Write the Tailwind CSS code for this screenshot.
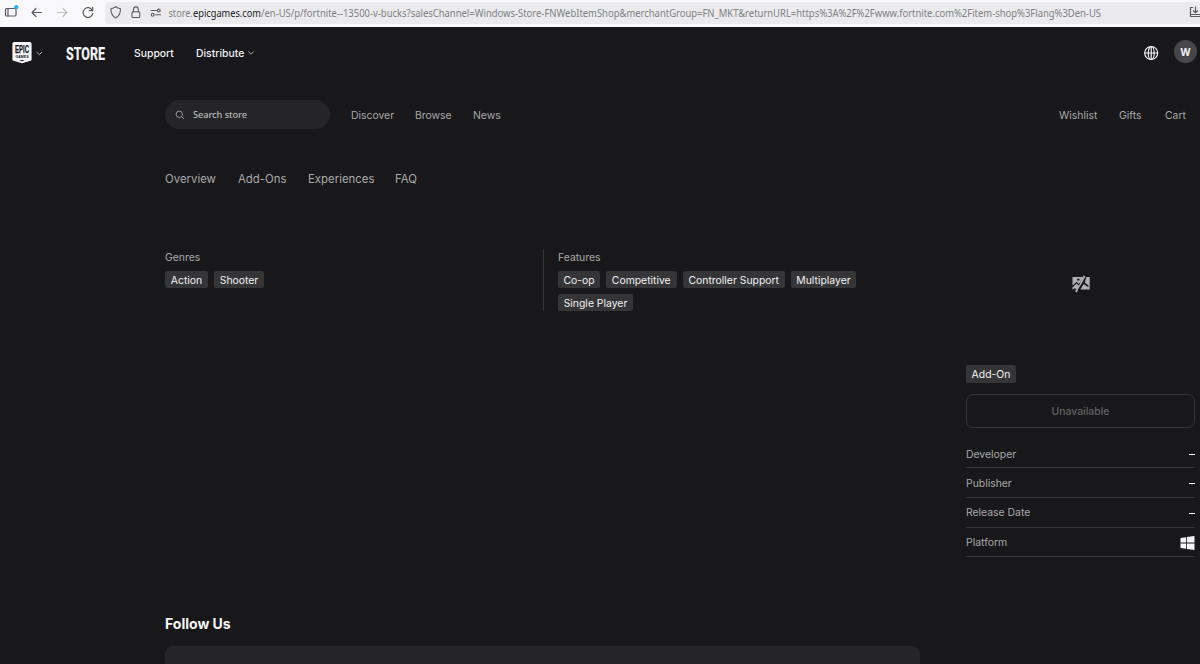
<!DOCTYPE html>
<html lang="en">
<head>
<meta charset="utf-8">
<title>Epic Games Store</title>
<script src="https://cdn.jsdelivr.net/npm/@tailwindcss/browser@4"></script>
</head>
<body class="w-[1200px] h-[664px] overflow-hidden bg-[#18181a] font-['Inter',sans-serif] text-[10.4px] text-[#a8a8aa]">
<div class="h-[27px] bg-[#f9f9fb] flex items-center overflow-hidden">
  <svg class="w-[104px] h-[27px] shrink-0" viewBox="0 0 104 27" fill="none" stroke="#5b5b66" stroke-width="1.2" stroke-linecap="round" stroke-linejoin="round">
    <rect x="5.500" y="8.500" width="10.500" height="7.500" rx="1"/><path d="M8 8.500v7.500"/>
    <circle cx="16.300" cy="7.200" r="2.100" fill="#25b5e4" stroke="none"/>
    <path d="M41.500 12.500H32M36 8.500l-4 4 4 4"/>
    <path stroke="#bdbdc3" d="M57.500 12.500H67M63 8.500l4 4-4 4"/>
    <path d="M92.300 10.200a4.900 4.900 0 1 0 .5 3.200M92.700 7.300v3.400h-3.400"/>
  </svg>
  <div class="ml-px mt-[-1px] h-[22px] w-[1095px] shrink-0 rounded-l-[4px] bg-[#ebebed] flex items-center">
    <svg class="w-[62px] h-[22px] shrink-0" viewBox="105 2 62 22" fill="none" stroke="#5b5b66" stroke-width="1.1" stroke-linejoin="round" stroke-linecap="round">
      <path d="M115.700 6.800c1.500 1.200 3 1.700 4.800 1.900 0 4.500-1.200 7.400-4.800 9.200-3.600-1.800-4.800-4.700-4.800-9.200 1.800-.2 3.300-.7 4.800-1.900z"/>
      <rect x="132" y="11.800" width="7.800" height="5.700" rx="1"/><path d="M133.500 11.800V9.300a2.400 2.400 0 0 1 4.800 0v2.500"/>
      <path d="M151 10.500h5.500M155 14.700h5.500"/><circle cx="158.800" cy="10.500" r="1.400"/><circle cx="152.700" cy="14.700" r="1.400"/>
    </svg>
    <svg class="w-[940px] h-[22px] shrink-0" viewBox="167 2 940 22" font-family="Noto Sans, sans-serif" font-size="10.500" fill="#808086">
      <text x="168.500" y="16.800" textLength="24.300" lengthAdjust="spacingAndGlyphs">store.</text>
      <text x="193" y="16.800" textLength="68" lengthAdjust="spacingAndGlyphs" fill="#222228">epicgames.com</text>
      <text x="261" y="16.800" textLength="840" lengthAdjust="spacingAndGlyphs">/en-US/p/fortnite--13500-v-bucks?salesChannel=Windows-Store-FNWebItemShop&amp;merchantGroup=FN_MKT&amp;returnURL=https%3A%2F%2Fwww.fortnite.com%2Fitem-shop%3Flang%3Den-US</text>
    </svg>
    <svg class="ml-auto w-[12px] h-[22px]" viewBox="1188 1 12 22" fill="none" stroke="#5b5b66" stroke-width="1.200"><path d="M1193 6.500h-2.500v9h11M1195.500 5.500v6M1193 9.500l2.500 2.300 2.500-2.300M1190.500 13.500h10"/></svg>
  </div>
</div>

<header class="h-[52px] bg-[#18181c] flex items-center text-[#f2f2f4] font-medium">
  <svg class="w-[118px] h-[52px]" viewBox="0 27 118 52">
    <path d="M14.200 42h15.600q1.800 0 1.800 1.800v15.400q0 1.200-1 1.600l-8.600 2.500-8.600-2.500q-1-.4-1-1.600V43.800q0-1.800 1.800-1.800z" fill="#f5f5f7"/>
    <text x="15" y="53" font-family="Liberation Sans, sans-serif" font-weight="700" font-size="11" textLength="14" lengthAdjust="spacingAndGlyphs" fill="#18181c" stroke="#18181c" stroke-width=".25">EPIC</text>
    <text x="15.500" y="58" font-family="Liberation Sans, sans-serif" font-weight="700" font-size="4" textLength="13" lengthAdjust="spacingAndGlyphs" fill="#18181c">GAMES</text>
    <path d="M19.200 60h5.600l-2.800 1.300z" fill="#18181c"/>
    <path d="M36.600 52l2.700 2.700L42 52" fill="none" stroke="#a5a5a9" stroke-width="1"/>
    <text x="66" y="59.500" font-family="Roboto, sans-serif" font-weight="800" font-size="17.800" textLength="39" lengthAdjust="spacingAndGlyphs" fill="#f5f5f7" stroke="#f5f5f7" stroke-width=".1">STORE</text>
  </svg>
  <span class="ml-[16px] w-[62px] pt-[2px]">Support</span>
  <span class="pt-[2px]">Distribute</span>
  <svg class="ml-[3px] w-[8px] h-[8px]" viewBox="0 0 8 8" fill="none" stroke="#a5a5a9"><path d="M1.300 2.500L4 5.200l2.700-2.700"/></svg>
  <svg class="ml-auto mr-[15px] w-[16px] h-[16px]" viewBox="0 0 16 16" fill="none" stroke="#f5f5f7" stroke-width="1.200"><circle cx="8.200" cy="8" r="6.500"/><ellipse cx="8.200" cy="8" rx="3" ry="6.500"/><path d="M1.700 8h13M8.200 1.500v13"/></svg>
  <div class="mt-[-3px] mr-[3px] size-[23px] rounded-full bg-[#47474a] flex items-center justify-center pt-px text-[10px] font-bold">W</div>
</header>

<nav class="mt-[21px] ml-[165px] mr-[13px] h-[29px] flex items-center">
  <div class="w-[165px] h-[29px] rounded-full bg-[#252528] flex items-center text-[#b8b8ba] font-['Noto_Sans',sans-serif] text-[9.3px] font-medium tracking-[-0.100px]">
    <svg class="ml-[10px] mr-[8px] w-[10px] h-[10px]" viewBox="0 0 10 10" fill="none" stroke="#a0a0a3" stroke-width=".9"><circle cx="4.300" cy="4.300" r="3.200"/><path d="M6.700 6.700L9 9"/></svg>Search store
  </div>
  <span class="ml-[21px] w-[64px] pt-[2px]">Discover</span><span class="w-[58px] pt-[2px]">Browse</span><span class="pt-[2px]">News</span>
  <span class="ml-auto w-[60px] pt-[2px]">Wishlist</span><span class="w-[46px] pt-[2px]">Gifts</span><span class="w-[22px] pt-[2px]">Cart</span>
</nav>

<nav class="mt-[41px] ml-[165px] h-[18px] pt-[2px] flex items-center text-[11.4px]">
  <span class="w-[73px]">Overview</span><span class="w-[70px]">Add-Ons</span><span class="w-[87px]">Experiences</span><span>FAQ</span>
</nav>

<div class="flex ml-[165px]">
  <main class="w-[755px] pt-[61px]">
    <div class="flex h-[62px]">
      <section class="w-[378px] pt-px">
        <h2 class="h-[16px] leading-[16px]">Genres</h2>
        <div class="mt-[5px] flex gap-[6px] text-[#f2f2f4]">
          <span class="w-[43px] h-[17px] pt-[2px] rounded-[2px] bg-[#353537] flex items-center justify-center">Action</span>
          <span class="w-[50px] h-[17px] pt-[2px] rounded-[2px] bg-[#353537] flex items-center justify-center">Shooter</span>
        </div>
      </section>
      <section class="w-[377px] pt-px pl-[14px] border-l border-[#353537]">
        <h2 class="h-[16px] leading-[16px]">Features</h2>
        <div class="mt-[5px] flex flex-wrap gap-[6px] text-[#f2f2f4]">
          <span class="w-[42px] h-[17px] pt-[2px] rounded-[2px] bg-[#353537] flex items-center justify-center">Co-op</span>
          <span class="w-[70.5px] h-[17px] pt-[2px] rounded-[2px] bg-[#353537] flex items-center justify-center">Competitive</span>
          <span class="w-[102.5px] h-[17px] pt-[2px] rounded-[2px] bg-[#353537] flex items-center justify-center">Controller Support</span>
          <span class="w-[65px] h-[17px] pt-[2px] rounded-[2px] bg-[#353537] flex items-center justify-center">Multiplayer</span>
          <span class="w-[75px] h-[17px] pt-[2px] rounded-[2px] bg-[#353537] flex items-center justify-center">Single Player</span>
        </div>
      </section>
    </div>
    <h2 class="mt-[303px] h-[20px] leading-[20px] text-[14px] font-bold text-[#f5f5f7]">Follow Us</h2>
    <div class="mt-[12px] h-[18px] rounded-t-[8px] bg-[#252527]"></div>
  </main>
  <aside class="ml-[46px] w-[229px] pt-[86px]">
    <svg class="mx-auto w-[20px] h-[20px]" viewBox="0 0 20 20" fill="#b0b0b2"><path d="M1.500 3h10.600L9.300 8 7.700 9.900 5.600 7.700 1.500 11.800z"/><circle cx="7.300" cy="5.600" r="1.200" fill="#18181a"/><path d="M12.600 1.500l1.900 1-3.900 7-3.700 6-.8 3-2.100-1.200 1.300-2.300-1.600-.8-2.200 1.500v-2.300l4.100-3.900 2.200 2.200z"/><path d="M15.400 3h3.300v12.500H9.300l3.400-5.600 4.300 3 .9-1.200-4.100-3.300z"/></svg>
    <div class="mt-[71px] w-[50px] h-[18px] rounded-[2px] bg-[#353537] text-[#f2f2f4] flex items-center justify-center pt-[2px]">Add-On</div>
    <div class="mt-[11px] h-[34px] rounded-[7px] border border-[#353537] text-[#626265] font-medium flex items-center justify-center pt-[2px]">Unavailable</div>
    <div class="mt-[11px] h-[29px] pt-[3px] border-b border-[#353537] flex items-center justify-between">Developer<i class="h-px w-[6px] bg-[#f2f2f4]"></i></div>
    <div class="h-[30px] pt-[2px] border-b border-[#353537] flex items-center justify-between">Publisher<i class="h-px w-[6px] bg-[#f2f2f4]"></i></div>
    <div class="h-[30px] pt-px border-b border-[#353537] flex items-center justify-between">Release Date<i class="mt-px h-px w-[6px] bg-[#f2f2f4]"></i></div>
    <div class="h-[29px] pt-[2px] border-b border-[#353537] flex items-center justify-between">Platform<svg class="w-[15px] h-[14px]" viewBox="0 0 15 14" fill="#f5f5f7"><path d="M.5 2l5.500-.8v5.400H.5zM6.800 1.100L14.500 0v6.600H6.800zM.5 7.400H6v5.400L.5 12zM6.800 7.400h7.700V14l-7.700-1.100z"/></svg></div>
  </aside>
</div>
</body>
</html>
